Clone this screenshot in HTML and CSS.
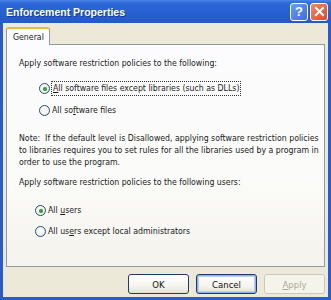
FILE: index.html
```html
<!DOCTYPE html>
<html>
<head>
  <meta charset="UTF-8">
  <title>Enforcement Properties</title>
  <link rel="stylesheet" href="styles.css">
</head>
<body>
  <div class="window">
    <div class="titlebar">
      <span class="title">Enforcement Properties</span>
      <span class="caption-btn help">?</span>
      <span class="caption-btn close">
        <svg width="11" height="11" viewBox="0 0 11 11"><path d="M2 2 L9 9 M9 2 L2 9" stroke="#fff" stroke-width="2" stroke-linecap="square"/></svg>
      </span>
    </div>

    <div class="client">
      <div class="tabs">
        <div class="tab">General</div>
      </div>
      <div class="panel">
        <p class="heading">Apply software restriction policies to the following:</p>
        <div class="radio indent first">
          <span class="dot checked"></span>
          <span class="focus"><u>A</u>ll software files except libraries (such as DLLs)</span>
        </div>
        <div class="radio indent second">
          <span class="dot"></span>
          <span>All so<u>f</u>tware files</span>
        </div>
        <p class="note">Note:&nbsp; If the default level is Disallowed, applying software restriction policies to libraries requires you to set rules for all the libraries used by a program in order to use the program.</p>
        <p class="heading users">Apply software restriction policies to the following users:</p>
        <div class="radio small first-user">
          <span class="dot checked"></span>
          <span>All <u>u</u>sers</span>
        </div>
        <div class="radio small second-user">
          <span class="dot"></span>
          <span>All us<u>e</u>rs except local administrators</span>
        </div>
      </div>

      <div class="buttons">
        <button class="btn">OK</button>
        <button class="btn default">Cancel</button>
        <button class="btn" disabled><u>A</u>pply</button>
      </div>
    </div>
  </div>
</body>
</html>
```
FILE: styles.css
```css
html, body { margin: 0; padding: 0; }
body { width: 331px; height: 300px; overflow: hidden; font-family: "DejaVu Sans Condensed", "Liberation Sans", Arial, sans-serif; font-size: 8.7px; color: #1a1a1a; }

.window { height: 300px; display: flex; flex-direction: column; background: #ece9d8; border: 3px solid #2a5bc8; border-top: 0; box-sizing: border-box; }

.titlebar { height: 23px; margin: 0 -3px; display: flex; align-items: center; padding: 0 3px 0 6px;
  background: linear-gradient(#4a86e8 0, #2d69d9 3px, #2760d2 50%, #2459c9 100%); }
.title { flex: 1; color: #fff; font-family: "Liberation Sans", sans-serif; font-weight: bold; font-size: 10.5px; text-shadow: 1px 1px 0 #0f3aa0; }
.caption-btn { width: 18px; height: 18px; box-sizing: border-box; border: 1px solid #fff; border-radius: 3px; display: flex; align-items: center; justify-content: center; margin-left: 2px; }
.help { background: linear-gradient(135deg, #6d9bf0, #3a6fe0); color: #fff; font-family: "Liberation Sans", sans-serif; font-weight: bold; font-size: 13px; }
.close { background: linear-gradient(135deg, #f08a6a, #dc4a22); }

.client { flex: 1; display: flex; flex-direction: column; padding: 4px 3px 0; }

.tabs { display: flex; height: 18px; position: relative; z-index: 1; }
.tab { width: 44px; box-sizing: border-box; border: 1px solid #919b9c; border-top: 2px solid #f5b63c; border-bottom: 0; border-radius: 3px 3px 0 0;
  background: #fcfcfe; padding: 3px 0 0 6px; }

.panel { height: 223px; box-sizing: border-box; border: 1px solid #919b9c; margin-top: -1px; padding: 12px 0 0 12px;
  background: linear-gradient(#fcfcfe 0, #fbfbf9 60%, #f4f3ee 100%); }
.panel p { margin: 0; line-height: 13px; }

.radio { display: flex; align-items: center; height: 13px; line-height: 13px; }
.indent { padding-left: 20px; }
.small { padding-left: 16px; }
.first { margin-top: 12px; }
.second { margin-top: 9px; }
.note { margin-top: 15px !important; line-height: 12px !important; padding-right: 4px; }
.users { margin-top: 8px !important; }
.first-user { margin-top: 15px; }
.second-user { margin-top: 8px; }

.dot { width: 11px; height: 11px; box-sizing: border-box; border: 1px solid #1c5180; border-radius: 50%; margin-right: 2px; flex: none;
  background: radial-gradient(circle at 40% 40%, #fff 0, #f3f2ec 60%, #dcdbd3 100%); position: relative; }
.dot.checked::after { content: ""; position: absolute; left: 2.5px; top: 2.5px; width: 4px; height: 4px; border-radius: 50%; background: #3a9a3a; box-shadow: 0 0 1px #8dd08d; }
.focus { outline: 1px dotted #333; outline-offset: 0; padding: 0 1px; }

.buttons { display: flex; justify-content: flex-end; gap: 7px; padding: 7px 0 0; }
.btn { width: 61px; height: 20px; padding: 0; font-family: inherit; font-size: 9.5px; color: #111; border: 1px solid #1d3a6e; border-radius: 3px;
  background: linear-gradient(#ffffff 0, #f5f4ef 60%, #e3e1d6 100%); }
.btn.default { box-shadow: inset 0 0 0 1px #8fb0ea, inset 0 0 0 2px #b9d0f4; }
.btn:disabled { color: #aca899; border-color: #cac8bb; background: #f5f4ea; }
```
